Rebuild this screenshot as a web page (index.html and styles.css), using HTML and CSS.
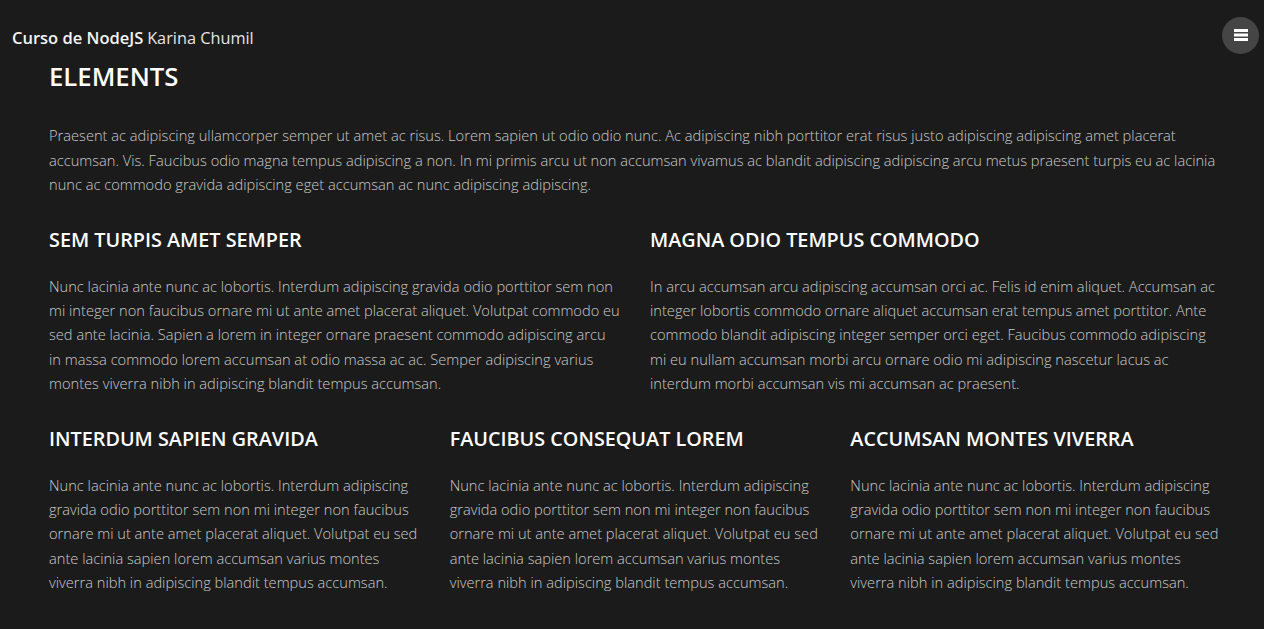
FILE: index.html
```html
<!DOCTYPE html>
<html lang="es">
<head>
<meta charset="utf-8">
<title>Elements</title>
<link rel="stylesheet" href="styles.css">
</head>
<body>
<header class="topbar">
  <div class="brand"><strong>Curso de NodeJS</strong> <span>Karina Chumil</span></div>
  <button class="menu-btn" aria-label="Menu">
    <svg width="14" height="12" viewBox="0 0 14 12"><rect x="0" y="0" width="14" height="3" fill="#fff"/><rect x="0" y="4.5" width="14" height="3" fill="#fff"/><rect x="0" y="9" width="14" height="3" fill="#fff"/></svg>
  </button>
</header>
<main class="wrapper">
  <h1 class="major">ELEMENTS</h1>
  <p class="intro">Praesent ac adipiscing ullamcorper semper ut amet ac risus. Lorem sapien ut odio odio nunc. Ac adipiscing nibh porttitor erat risus justo adipiscing adipiscing amet placerat accumsan. Vis. Faucibus odio magna tempus adipiscing a non. In mi primis arcu ut non accumsan vivamus ac blandit adipiscing adipiscing arcu metus praesent turpis eu ac lacinia nunc ac commodo gravida adipiscing eget accumsan ac nunc adipiscing adipiscing.</p>
  <div class="row two">
    <section>
      <h3>SEM TURPIS AMET SEMPER</h3>
      <p>Nunc lacinia ante nunc ac lobortis. Interdum adipiscing gravida odio porttitor sem non mi integer non faucibus ornare mi ut ante amet placerat aliquet. Volutpat commodo eu sed ante lacinia. Sapien a lorem in integer ornare praesent commodo adipiscing arcu in massa commodo lorem accumsan at odio massa ac ac. Semper adipiscing varius montes viverra nibh in adipiscing blandit tempus accumsan.</p>
    </section>
    <section>
      <h3>MAGNA ODIO TEMPUS COMMODO</h3>
      <p>In arcu accumsan arcu adipiscing accumsan orci ac. Felis id enim aliquet. Accumsan ac integer lobortis commodo ornare aliquet accumsan erat tempus amet porttitor. Ante commodo blandit adipiscing integer semper orci eget. Faucibus commodo adipiscing mi eu nullam accumsan morbi arcu ornare odio mi adipiscing nascetur lacus ac interdum morbi accumsan vis mi accumsan ac praesent.</p>
    </section>
  </div>
  <div class="row three">
    <section>
      <h3>INTERDUM SAPIEN GRAVIDA</h3>
      <p>Nunc lacinia ante nunc ac lobortis. Interdum adipiscing gravida odio porttitor sem non mi integer non faucibus ornare mi ut ante amet placerat aliquet. Volutpat eu sed ante lacinia sapien lorem accumsan varius montes viverra nibh in adipiscing blandit tempus accumsan.</p>
    </section>
    <section>
      <h3>FAUCIBUS CONSEQUAT LOREM</h3>
      <p>Nunc lacinia ante nunc ac lobortis. Interdum adipiscing gravida odio porttitor sem non mi integer non faucibus ornare mi ut ante amet placerat aliquet. Volutpat eu sed ante lacinia sapien lorem accumsan varius montes viverra nibh in adipiscing blandit tempus accumsan.</p>
    </section>
    <section>
      <h3>ACCUMSAN MONTES VIVERRA</h3>
      <p>Nunc lacinia ante nunc ac lobortis. Interdum adipiscing gravida odio porttitor sem non mi integer non faucibus ornare mi ut ante amet placerat aliquet. Volutpat eu sed ante lacinia sapien lorem accumsan varius montes viverra nibh in adipiscing blandit tempus accumsan.</p>
    </section>
  </div>
</main>
</body>
</html>
```
FILE: styles.css
```css
html, body {
  margin: 0;
  padding: 0;
}
body {
  background: #1b1b1b;
  color: #cacaca;
  font-family: "Open Sans", "Noto Sans", sans-serif;
  font-weight: 300;
  font-size: 14.65px;
  line-height: 24.25px;
}
.topbar {
  display: flex;
  align-items: center;
  justify-content: space-between;
  padding: 20px 5px 0 12px;
  height: 36px;
}
.brand {
  color: #f4f4f4;
  white-space: nowrap;
  line-height: 1.3;
}
.brand strong {
  font-weight: 600;
  font-size: 16.5px;
}
.brand span {
  font-weight: 400;
  font-size: 16.3px;
  color: #e6e6e6;
}
.menu-btn {
  width: 37px;
  height: 37px;
  border-radius: 50%;
  border: 0;
  background: #454545;
  display: flex;
  align-items: center;
  justify-content: center;
  padding: 0;
  margin-top: -6px;
}
.wrapper {
  padding: 4px 43px 20px 49px;
}
h1.major {
  margin: 0 0 30px 0;
  font-size: 25.7px;
  font-weight: 600;
  color: #ffffff;
  line-height: 1.3;
}
p {
  margin: 0 0 31px 0;
}
p.intro {
  margin-bottom: 31px;
}
h3 {
  margin: 0 0 21px 0;
  font-size: 19.8px;
  font-weight: 600;
  color: #ffffff;
  line-height: 1.3;
}
.row {
  display: grid;
  column-gap: 30px;
}
.row.two {
  grid-template-columns: 1fr 1fr;
}
.row.three {
  grid-template-columns: 1fr 1fr 1fr;
}
```
